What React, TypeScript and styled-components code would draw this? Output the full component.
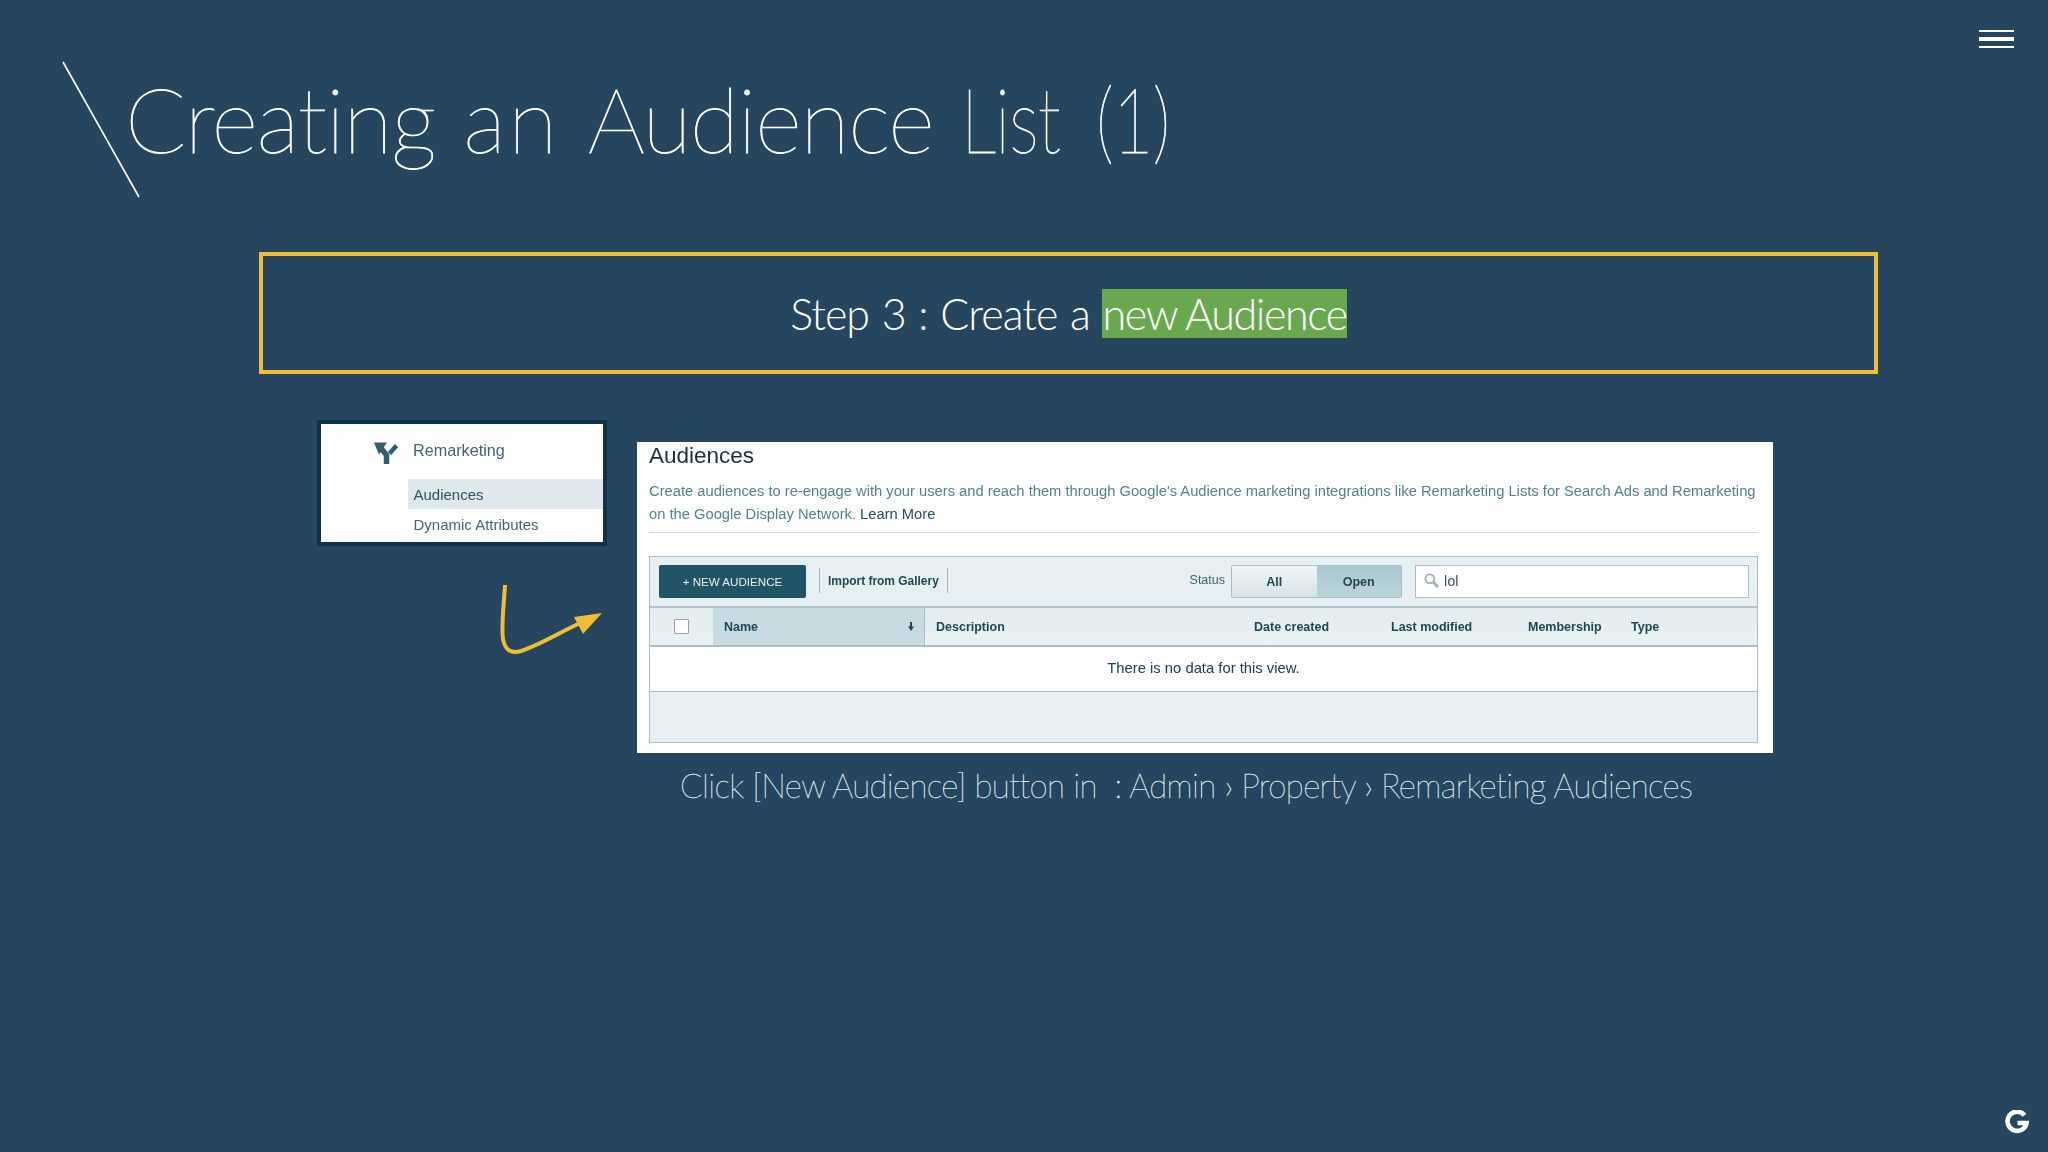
import React from "react";
import styled, { createGlobalStyle } from "styled-components";

const Global = createGlobalStyle`
  html, body { margin: 0; padding: 0; background: #25465e; }
  * { box-sizing: border-box; }
`;

const Slide = styled.div`
  position: relative;
  width: 2048px;
  height: 1152px;
  overflow: hidden;
  background: #25465e;
  display: flex;
  flex-direction: column;
  font-family: "Liberation Sans", Arial, sans-serif;
`;

const Header = styled.header`
  position: relative;
  height: 252px;
  padding: 64px 0 0 125px;
`;

const Slash = styled.svg`
  position: absolute;
  left: 62px;
  top: 61px;
`;

const Title = styled.h1`
  margin: 0;
  display: flex;
  gap: 28px;
  font-family: Lato, sans-serif;
  font-weight: 100;
  font-size: 90px;
  line-height: 108px;
  color: #fff;
  -webkit-text-stroke: 0.8px #fff;
  white-space: nowrap;
`;

const TitleWord = styled.span<{ $ls: number }>`
  letter-spacing: ${(p) => p.$ls}px;
`;

const NarrowWord = styled.span<{ $pull: number }>`
  display: inline-block;
  letter-spacing: -1px;
  transform: scaleX(0.78);
  transform-origin: left center;
  margin-right: ${(p) => p.$pull}px;
`;

const Menu = styled.div`
  position: absolute;
  left: 1979px;
  top: 30px;
  width: 35px;
  display: flex;
  flex-direction: column;
  gap: 5px;
`;

const MenuLine = styled.span<{ $h: number }>`
  display: block;
  height: ${(p) => p.$h}px;
  background: #fff;
`;

const Logo = styled.svg`
  position: absolute;
  left: 2005px;
  top: 1110px;
`;

const Callout = styled.section`
  margin-left: 259px;
  width: 1619px;
  height: 122px;
  border: 4px solid #f0bd37;
  display: flex;
  align-items: center;
  justify-content: center;
  font-family: Lato, sans-serif;
  font-weight: 300;
  font-size: 43px;
  letter-spacing: -1px;
  word-spacing: 2px;
  color: #fff;
  white-space: pre;
`;

const Highlight = styled.span`
  display: inline-block;
  height: 49px;
  line-height: 49px;
  letter-spacing: -1.4px;
  word-spacing: 0;
  background: #6aa84f;
`;

const Content = styled.div`
  display: flex;
  margin: 46px 0 0 317px;
  gap: 30px;
  align-items: flex-start;
`;

const LeftColumn = styled.div`
  width: 290px;
  display: flex;
  flex-direction: column;
`;

const NavCard = styled.div`
  height: 126px;
  border: 4px solid #0e3348;
  background: #fff;
  display: flex;
  flex-direction: column;
  filter: blur(0.35px);
`;

const NavHead = styled.div`
  height: 55px;
  padding: 18px 0 0 53px;
  display: flex;
  align-items: flex-start;
  gap: 14px;
  font-size: 16.2px;
  line-height: 16px;
  color: #40666f;
`;

const NavItem = styled.div<{ $active?: boolean }>`
  margin-left: 87px;
  height: 30px;
  padding-left: 5.5px;
  display: flex;
  align-items: center;
  font-size: 15px;
  color: ${(p) => (p.$active ? "#2c5560" : "#40666f")};
  background: ${(p) => (p.$active ? "#dfe8ec" : "transparent")};
`;

const Arrow = styled.svg`
  margin: 38px 0 0 177px;
`;

const RightColumn = styled.div`
  width: 1136px;
  margin-top: 22px;
  display: flex;
  flex-direction: column;
  align-items: flex-start;
`;

const Panel = styled.div`
  width: 1136px;
  height: 311px;
  background: #fff;
  padding: 0 15px 0 12px;
  display: flex;
  flex-direction: column;
  filter: blur(0.35px);
`;

const PanelTitle = styled.h2`
  margin: 0;
  height: 27px;
  font-weight: 400;
  font-size: 22.5px;
  line-height: 27px;
  color: #17333c;
`;

const Desc = styled.p`
  margin: 11px 0 0;
  font-size: 14.73px;
  line-height: 22.5px;
  color: #4f8589;
  white-space: nowrap;
`;

const LearnMore = styled.span`
  color: #24505a;
`;

const Divider = styled.hr`
  margin: 7px 0 0;
  border: 0;
  height: 1px;
  background: #ccd8da;
`;

const TableBox = styled.div`
  margin-top: 23px;
  height: 187px;
  border: 1px solid #a9bfc6;
  background: #e6eff1;
  display: flex;
  flex-direction: column;
`;

const Toolbar = styled.div`
  height: 51px;
  flex: none;
  padding: 8px 8px 0 9px;
  display: flex;
  align-items: flex-start;
  border-bottom: 2px solid #b0c5cb;
`;

const NewButton = styled.button`
  width: 147px;
  height: 33px;
  margin: 0 13px 0 0;
  padding: 0;
  border: 0;
  border-radius: 2px;
  background: #205466;
  color: #e6f0f2;
  font: 400 11.6px "Liberation Sans", Arial, sans-serif;
`;

const LinkCell = styled.div`
  margin-top: 3px;
  height: 25px;
  width: 129px;
  border-left: 1px solid #9fb6bd;
  border-right: 1px solid #9fb6bd;
  padding-left: 8px;
  font-size: 11.95px;
  font-weight: 700;
  line-height: 27px;
  color: #1f4854;
  white-space: nowrap;
`;

const StatusLabel = styled.div`
  margin: 0 6px 0 auto;
  height: 33px;
  line-height: 31px;
  font-size: 12.5px;
  color: #3f6670;
`;

const Toggle = styled.div`
  display: flex;
  width: 171px;
  height: 33px;
  border: 1px solid #a9c0c7;
  border-radius: 2px;
  overflow: hidden;
`;

const ToggleOption = styled.div<{ $on?: boolean }>`
  flex: 1;
  text-align: center;
  line-height: 32px;
  font-size: 12.5px;
  font-weight: 700;
  color: #1f4854;
  background: ${(p) =>
    p.$on
      ? "linear-gradient(#a9c8d0, #bcd4da)"
      : "linear-gradient(#f0f5f6, #d6e3e7)"};
`;

const SearchBox = styled.div`
  width: 334px;
  height: 33px;
  margin-left: 13px;
  padding: 0 0 2px 8px;
  border: 1px solid #a9c0c7;
  background: #fff;
  display: flex;
  align-items: center;
  gap: 5px;
  font-size: 14.5px;
  color: #33525b;
`;

const HeadRow = styled.div`
  height: 39px;
  flex: none;
  display: flex;
  border-bottom: 2px solid #a9bfc6;
  font-size: 12.5px;
  font-weight: 700;
  color: #1f4854;
  background: linear-gradient(#e2edf0, #e9f1f3);
`;

const CheckCell = styled.div`
  width: 63px;
  display: flex;
  align-items: center;
  justify-content: center;
`;

const Checkbox = styled.span`
  display: block;
  width: 15px;
  height: 15px;
  border: 1px solid #8fa5ab;
  border-radius: 1px;
  background: #fff;
`;

const HeadCell = styled.div<{ $w: number; $sorted?: boolean }>`
  width: ${(p) => p.$w}px;
  display: flex;
  align-items: center;
  justify-content: space-between;
  padding: 0 ${(p) => (p.$sorted ? 10 : 0)}px 0 ${(p) => (p.$sorted ? 11 : 0)}px;
  background: ${(p) => (p.$sorted ? "#c8dbe2" : "transparent")};
  border-right: ${(p) => (p.$sorted ? "1px solid #a9bfc6" : "0")};
  margin-right: ${(p) => (p.$sorted ? 11 : 0)}px;
`;

const EmptyRow = styled.div`
  height: 45px;
  flex: none;
  padding-bottom: 2px;
  background: #fff;
  border-bottom: 1px solid #a9bfc6;
  display: flex;
  align-items: center;
  justify-content: center;
  font-size: 14.8px;
  color: #21404a;
`;

const Caption = styled.p`
  margin: 12px 0 0 43px;
  font-family: Lato, sans-serif;
  font-weight: 100;
  font-size: 33px;
  line-height: 40px;
  letter-spacing: -0.6px;
  color: #e2edf1;
  -webkit-text-stroke: 0.35px #e2edf1;
  white-space: pre;
`;

export default function App() {
  return (
    <Slide>
      <Global />
      <Header>
        <Slash width="78" height="137" viewBox="0 0 78 137">
          <line x1="1" y1="1" x2="77" y2="136" stroke="#fff" strokeWidth="1.6" />
        </Slash>
        <Title>
          <TitleWord $ls={-1.2}>Creating</TitleWord>
          <TitleWord $ls={2.5}>an</TitleWord>
          <TitleWord $ls={-1.2}>Audience</TitleWord>
          <NarrowWord $pull={-20}>List</NarrowWord>
          <NarrowWord $pull={-18}>(1)</NarrowWord>
        </Title>
      </Header>
      <Menu>
        <MenuLine $h={2} />
        <MenuLine $h={4} />
        <MenuLine $h={2} />
      </Menu>
      <Callout>
        Step 3 : Create a <Highlight>new Audience</Highlight>
      </Callout>
      <Content>
        <LeftColumn>
          <NavCard>
            <NavHead>
              <svg width="25" height="22" viewBox="0 0 25 22">
                <path d="M0 0.5h13L5 12.5z" fill="#2d5f6d" />
                <path d="M6 5l6.5 8v9" fill="none" stroke="#2d5f6d" strokeWidth="5.5" />
                <path d="M15.5 11.5L22.5 3.5" fill="none" stroke="#2d5f6d" strokeWidth="4.5" />
              </svg>
              Remarketing
            </NavHead>
            <NavItem $active>Audiences</NavItem>
            <NavItem>Dynamic Attributes</NavItem>
          </NavCard>
          <Arrow width="112" height="72" viewBox="0 0 112 72">
            <path d="M11 1C10 20 7 44 9 55C11 66 17 70 27 67C45 61 65 49 86 39" fill="none" stroke="#f0bd37" strokeWidth="4" />
            <path d="M108 29L80 33L89 50z" fill="#f0bd37" />
          </Arrow>
        </LeftColumn>
        <RightColumn>
          <Panel>
            <PanelTitle>Audiences</PanelTitle>
            <Desc>
              Create audiences to re-engage with your users and reach them through Google's Audience marketing integrations like Remarketing Lists for Search Ads and Remarketing
              <br />
              on the Google Display Network. <LearnMore>Learn More</LearnMore>
            </Desc>
            <Divider />
            <TableBox>
              <Toolbar>
                <NewButton>+ NEW AUDIENCE</NewButton>
                <LinkCell>Import from Gallery</LinkCell>
                <StatusLabel>Status</StatusLabel>
                <Toggle>
                  <ToggleOption>All</ToggleOption>
                  <ToggleOption $on>Open</ToggleOption>
                </Toggle>
                <SearchBox>
                  <svg width="15" height="15" viewBox="0 0 15 15">
                    <circle cx="5.8" cy="5.8" r="4.4" fill="none" stroke="#9fb0b5" strokeWidth="1.8" />
                    <path d="M9 9l5 5" stroke="#9fb0b5" strokeWidth="3" />
                  </svg>
                  lol
                </SearchBox>
              </Toolbar>
              <HeadRow>
                <CheckCell>
                  <Checkbox />
                </CheckCell>
                <HeadCell $w={212} $sorted>
                  <span>Name</span>
                  <svg width="6" height="9" viewBox="0 0 6 9">
                    <path d="M3 0v5" stroke="#1f4854" strokeWidth="2" />
                    <path d="M0 4.5h6L3 9z" fill="#1f4854" />
                  </svg>
                </HeadCell>
                <HeadCell $w={318}>Description</HeadCell>
                <HeadCell $w={137}>Date created</HeadCell>
                <HeadCell $w={137}>Last modified</HeadCell>
                <HeadCell $w={103}>Membership</HeadCell>
                <HeadCell $w={100}>Type</HeadCell>
              </HeadRow>
              <EmptyRow>There is no data for this view.</EmptyRow>
            </TableBox>
          </Panel>
          <Caption>Click [New Audience] button in  : Admin › Property › Remarketing Audiences</Caption>
        </RightColumn>
      </Content>
      <Logo width="24" height="24" viewBox="0 0 24 24">
        <path d="M19.6 5.2A9.6 9.6 0 1 0 21.6 13H12.5" fill="none" stroke="#fff" strokeWidth="4.6" />
      </Logo>
    </Slide>
  );
}
